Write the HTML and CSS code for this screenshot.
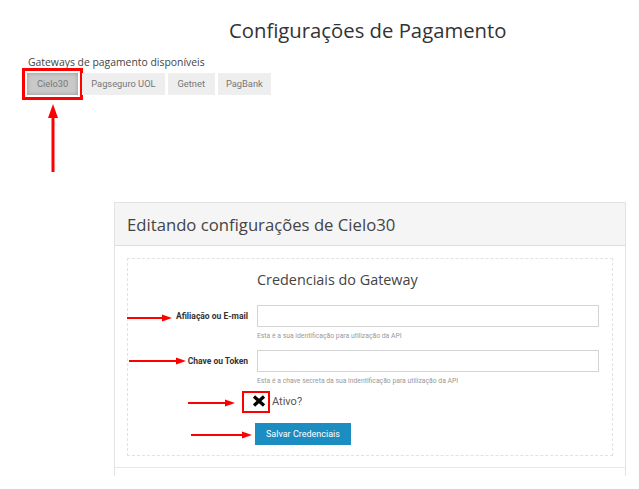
FILE: index.html
```html
<!DOCTYPE html>
<html lang="pt-BR">
<head>
    <meta charset="UTF-8">
    <meta name="viewport" content="width=device-width, initial-scale=1.0">
    <title>Configurações de Pagamento</title>
    <link rel="stylesheet" href="styles.css">
</head>
<body>
    <div class="page">
        <h1 class="title">Configurações de Pagamento</h1>
        <p class="subtitle">Gateways de pagamento disponíveis</p>
        <nav class="tabs">
            <a class="tab active marked" href="#">Cielo30</a>
            <a class="tab" href="#">Pagseguro UOL</a>
            <a class="tab" href="#">Getnet</a>
            <a class="tab" href="#">PagBank</a>
        </nav>

        <section class="panel">
            <div class="panel-head">Editando configurações de Cielo30</div>
            <div class="panel-body">
                <form class="creds">
                    <h2 class="creds-title">Credenciais do Gateway</h2>

                    <label class="lbl" for="afiliacao">Afiliação ou E-mail</label>
                    <div class="field">
                        <input class="inp" type="text" id="afiliacao">
                        <small class="help">Esta é a sua identificação para utilização da API</small>
                    </div>

                    <label class="lbl" for="chave">Chave ou Token</label>
                    <div class="field">
                        <input class="inp" type="text" id="chave">
                        <small class="help">Esta é a chave secreta da sua indentificação para utilização da API</small>
                    </div>

                    <div class="checkrow">
                        <span class="mark">
                            <svg width="14" height="12" viewBox="0 0 14 12"><path d="M2 1.5 L12 10.5 M12 1.5 L2 10.5" stroke="#000" stroke-width="3.2"/></svg>
                        </span>
                        <span class="check-text">Ativo?</span>
                    </div>

                    <div class="actions">
                        <button class="btn" type="button">Salvar Credenciais</button>
                    </div>
                </form>
            </div>
            <div class="panel-foot"></div>
        </section>
    </div>

    <!-- annotation arrows drawn over the screenshot -->
    <svg class="arrows" width="639" height="489" viewBox="0 0 639 489">
        <g fill="#f00" stroke="#f00">
            <line x1="53" y1="172" x2="53" y2="114" stroke-width="3"/>
            <path d="M53 104 L48 118 L58 118 Z" stroke="none"/>

            <line x1="127" y1="318" x2="164" y2="318" stroke-width="2"/>
            <path d="M172 318 L162 314.5 L162 321.5 Z" stroke="none"/>

            <line x1="129" y1="361" x2="178" y2="361" stroke-width="2"/>
            <path d="M186 361 L176 357.5 L176 364.5 Z" stroke="none"/>

            <line x1="188" y1="403" x2="227" y2="403" stroke-width="2"/>
            <path d="M235 403 L225 399.5 L225 406.5 Z" stroke="none"/>

            <line x1="191" y1="435" x2="244" y2="435" stroke-width="2"/>
            <path d="M252 435 L242 431.5 L242 438.5 Z" stroke="none"/>
        </g>
    </svg>
</body>
</html>
```

FILE: styles.css
```css
*{
    box-sizing: border-box;
}
body{
    margin: 0;
    background: #fff;
    font-family: Roboto, "Liberation Sans", Arial, sans-serif;
    color: #555;
}
.page{
    padding-top: 16px;
    padding-bottom: 20px;
}
.title{
    margin: 0 0 0 229px;
    font-family: "Open Sans", "Noto Sans", sans-serif;
    font-weight: 400;
    font-size: 20.3px;
    line-height: 28px;
    color: #333;
}
.subtitle{
    margin: 11px 0 0 28px;
    font-family: "Open Sans", "Noto Sans", sans-serif;
    font-size: 10.4px;
    line-height: 14px;
    color: #444;
}
.tabs{
    display: flex;
    gap: 3px;
    margin: 4px 0 0 27px;
}
.tab{
    display: block;
    height: 22px;
    line-height: 22px;
    padding: 0 9px;
    background: #eee;
    color: #777;
    font-size: 9.3px;
    text-decoration: none;
}
.tab:nth-child(3){
    padding: 0 10px;
}
.tab:last-child{
    padding: 0 8px;
}
.tab.active{
    background: #c9c9c9;
    box-shadow: inset 0 0 4px rgba(0, 0, 0, 0.25);
    padding: 0 10px;
    margin-right: 1px;
}
.marked{
    outline: 3px solid #f00;
    outline-offset: 2px;
}

.panel{
    margin: 107px 0 0 114px;
    width: 512px;
    border: 1px solid #e3e3e3;
    border-bottom: none;
}
.panel-head{
    height: 43px;
    padding: 0 12px;
    display: flex;
    align-items: center;
    background: #f5f5f5;
    border-bottom: 1px solid #ddd;
    font-family: "Open Sans", "Noto Sans", sans-serif;
    font-size: 16.7px;
    color: #444;
}
.panel-body{
    padding: 12px 12px 11px 12px;
    border-bottom: 1px solid #e8e8e8;
}
.panel-foot{
    height: 8px;
}

.creds{
    margin: 0;
    border: 1px dashed #e2e2e2;
    padding: 11px 12px 10px 0;
    display: grid;
    grid-template-columns: 120px 342px;
    column-gap: 9px;
    align-items: start;
}
.creds-title{
    grid-column: 2;
    margin: 0 0 15px;
    font-family: "Open Sans", "Noto Sans", sans-serif;
    font-weight: 400;
    font-size: 14.4px;
    line-height: 20px;
    color: #444;
}
.lbl{
    text-align: right;
    font-size: 8.5px;
    font-weight: 700;
    color: #333;
    line-height: 22px;
    white-space: nowrap;
}
.field{
    display: flex;
    flex-direction: column;
    margin-bottom: 10px;
}
.inp{
    height: 22px;
    width: 342px;
    border: 1px solid #d4d4d4;
    padding: 0 6px;
    margin: 0;
}
.help{
    margin-top: 5px;
    font-size: 6.8px;
    line-height: 8px;
    color: #999;
}
.checkrow{
    grid-column: 2;
    display: flex;
    align-items: center;
    margin: -4px 0 0 -15px;
}
.mark{
    display: flex;
    justify-content: flex-end;
    align-items: center;
    width: 28px;
    height: 22px;
    border: 2px solid #f00;
    padding: 0 2px 3px 0;
}
.check-text{
    margin-left: 2px;
    font-size: 11px;
    color: #555;
    padding-bottom: 2px;
}
.actions{
    grid-column: 2;
    margin-top: 9px;
}
.btn{
    height: 22px;
    padding: 0 11px;
    margin-left: -2px;
    border: none;
    background: #1b8dc0;
    color: #fff;
    font-family: Roboto, "Liberation Sans", Arial, sans-serif;
    font-size: 9px;
}

.arrows{
    position: absolute;
    left: 0;
    top: 0;
    pointer-events: none;
}
```
